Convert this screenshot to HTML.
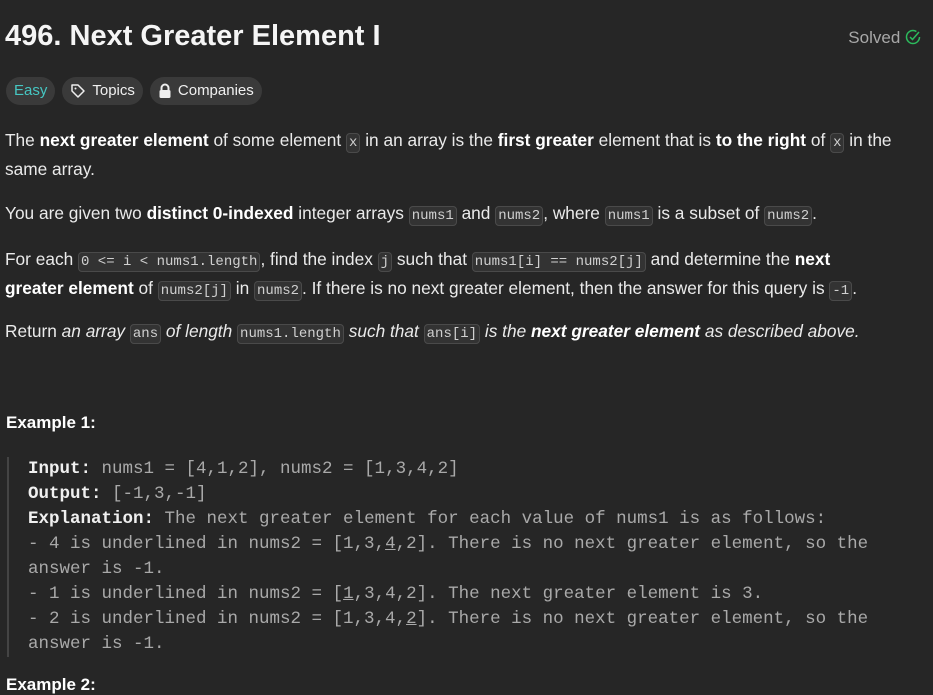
<!DOCTYPE html>
<html><head><meta charset="utf-8"><style>
body{margin:0;background:#262626;width:933px;height:685px;overflow:hidden;font-family:"Liberation Sans",sans-serif;color:#eff1f6}
.t{position:absolute;left:5px;top:20px;font-size:29px;font-weight:bold;color:#f5f5f5}
.solved{position:absolute;right:12px;top:28px;font-size:17px;color:#a8a8a8}
.pills{position:absolute;left:6px;top:77px;display:flex;gap:7px}
.p{height:28px;border-radius:14px;background:#3a3a3a;font-size:15px;line-height:28px;padding:0 8px;color:#f0f0f0;display:flex;align-items:center;gap:6px}
.para{position:absolute;left:5px;width:920px;font-size:17.3px;line-height:26px;color:#eaeaea}
code{font-family:"Liberation Mono",monospace;font-size:14px;background:#333;border:1px solid #4a4a4a;border-radius:4px;padding:1px 2px;color:#d0d0d0}
b{color:#fff}
.ex{position:absolute;left:6px;top:413px;font-size:17px;font-weight:bold;color:#fff}
.pre{position:absolute;left:7px;top:457px;border-left:2px solid #444;padding-left:19px;font-family:"Liberation Mono",monospace;font-size:17.5px;line-height:25px;color:#a9a9a9;white-space:pre;height:200px}
.pre b{color:#f0f0f0}
</style></head><body>
<div class="t">496. Next Greater Element I</div>
<div class="solved">Solved <svg width="16" height="16" viewBox="0 0 16 16" style="vertical-align:-2px"><circle cx="8" cy="8" r="6.5" fill="none" stroke="#2cbb5d" stroke-width="1.5" stroke-dasharray="34 7"/><path d="M5 8l2.5 2.5L14 3" fill="none" stroke="#2cbb5d" stroke-width="1.5"/></svg></div>
<div class="pills">
<div class="p" style="color:#46c6c2">Easy</div>
<div class="p"><svg width="16" height="16" viewBox="0 0 16 16"><path d="M2 2h6l6 6-6 6-6-6z" fill="none" stroke="#eee" stroke-width="1.5" stroke-linejoin="round"/><circle cx="5.5" cy="5.5" r="1" fill="#eee"/></svg>Topics</div>
<div class="p"><svg width="14" height="16" viewBox="0 0 14 16"><path d="M3.5 7V5a3.5 3.5 0 017 0v2" fill="none" stroke="#eee" stroke-width="2"/><rect x="1.5" y="7" width="11" height="8" rx="1.5" fill="#eee"/></svg>Companies</div>
</div>
<div class="para" style="top:127px">The <b>next greater element</b> of some element <code>x</code> in an array is the <b>first greater</b> element that is <b>to the right</b> of <code>x</code> in the same array.</div>
<div class="para" style="top:200px">You are given two <b>distinct 0-indexed</b> integer arrays <code>nums1</code> and <code>nums2</code>, where <code>nums1</code> is a subset of <code>nums2</code>.</div>
<div class="para" style="top:246px;width:880px">For each <code>0 &lt;= i &lt; nums1.length</code>, find the index <code>j</code> such that <code>nums1[i] == nums2[j]</code> and determine the <b>next greater element</b> of <code>nums2[j]</code> in <code>nums2</code>. If there is no next greater element, then the answer for this query is <code>-1</code>.</div>
<div class="para" style="top:318px">Return <i>an array</i> <code>ans</code> <i>of length</i> <code>nums1.length</code> <i>such that</i> <code>ans[i]</code> <i>is the <b>next greater element</b> as described above.</i></div>
<div class="ex">Example 1:</div>
<div class="pre"><b>Input:</b> nums1 = [4,1,2], nums2 = [1,3,4,2]
<b>Output:</b> [-1,3,-1]
<b>Explanation:</b> The next greater element for each value of nums1 is as follows:
- 4 is underlined in nums2 = [1,3,<u>4</u>,2]. There is no next greater element, so the
answer is -1.
- 1 is underlined in nums2 = [<u>1</u>,3,4,2]. The next greater element is 3.
- 2 is underlined in nums2 = [1,3,4,<u>2</u>]. There is no next greater element, so the
answer is -1.</div>
<div class="ex" style="top:675px">Example 2:</div>
</body></html>
